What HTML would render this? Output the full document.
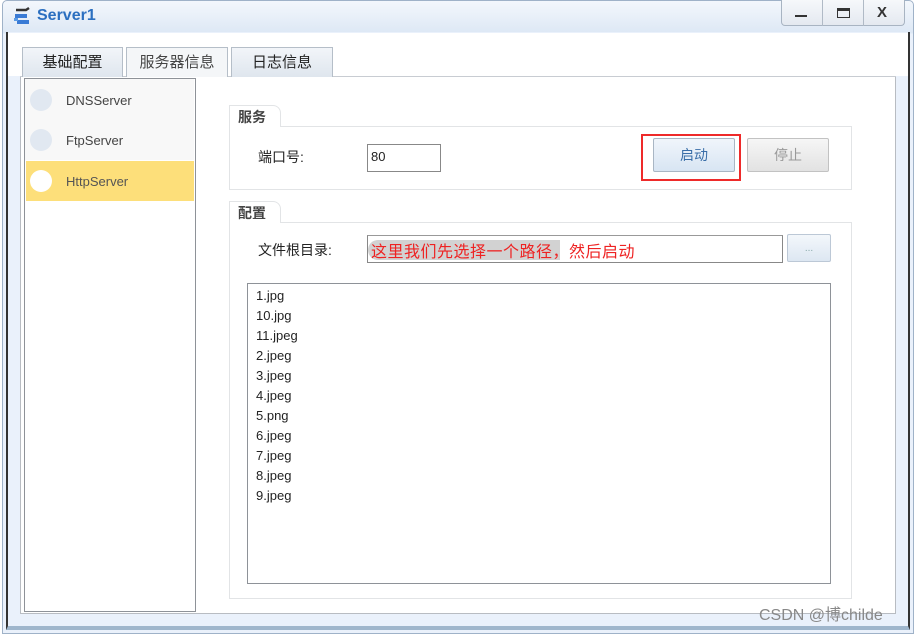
<!DOCTYPE html>
<html><head><meta charset="utf-8"><style>
*{margin:0;padding:0;box-sizing:border-box}
body{width:918px;height:636px;background:#fff;position:relative;overflow:hidden;font-family:"Liberation Sans","Noto Sans CJK SC",sans-serif;font-size:13px;color:#222}
.a{position:absolute}
</style></head><body>
<div class="a" style="left:0;top:0;width:918px;height:636px;background:#fff"></div>
<div class="a" style="left:2px;top:0;width:912px;height:634px;background:linear-gradient(#f3f7fc,#dde8f5 32px,#eaf1fb 33px);border:1px solid #9fb2c8;border-radius:5px 5px 0 0"></div>
<div class="a" style="left:6px;top:32px;width:904px;height:598px;background:#eaf1fb;border-left:2px solid #333;border-right:2px solid #333;border-bottom:4px solid #9fb6cc"></div>
<div class="a" style="left:12px;top:6px;width:20px;height:18px">
<svg width="20" height="20"><path d="M4 4h10l3-2" stroke="#333" stroke-width="2.5" fill="none"/><rect x="3" y="8" width="12" height="4" fill="#3a7bd5"/><rect x="5" y="14" width="12" height="4" fill="#3a7bd5"/><rect x="2" y="12" width="4" height="3" fill="#5a9be5"/></svg></div>
<div class="a" style="left:37px;top:7px;font-size:16px;font-weight:bold;color:#2b6fc0">Server1</div>
<div class="a" style="left:781px;top:0;width:124px;height:26px;border:1px solid #a8b4c2;border-top:none;border-radius:0 0 4px 4px;background:linear-gradient(#f6f8fb,#e4e9f0)"></div>
<div class="a" style="left:822px;top:0;width:1px;height:26px;background:#b0bac6"></div>
<div class="a" style="left:863px;top:0;width:1px;height:26px;background:#b0bac6"></div>
<div class="a" style="left:795px;top:15px;width:12px;height:2px;background:#333"></div>
<div class="a" style="left:837px;top:8px;width:13px;height:10px;border:1px solid #333;border-top:3px solid #333"></div>
<div class="a" style="left:877px;top:4px;font-size:15px;font-weight:bold;color:#333">X</div>
<div class="a" style="left:20px;top:76px;width:876px;height:538px;background:#fff;border:1px solid #b8bcc2"></div>
<div class="a" style="left:8px;top:33px;width:900px;height:43px;background:#fff"></div>
<div class="a" style="left:20px;top:76px;width:876px;height:1px;background:#c8ccd2"></div>
<div class="a" style="left:22px;top:47px;width:101px;height:30px;background:linear-gradient(#f2f5f9,#dfe6ee);border:1px solid #b5bec8;border-bottom:none;text-align:center;line-height:30px;font-size:15px">基础配置</div>
<div class="a" style="left:126px;top:47px;width:102px;height:30px;background:#f4f6f8;border:1px solid #b5bec8;border-bottom:none;text-align:center;line-height:30px;font-size:15px;color:#444">服务器信息</div>
<div class="a" style="left:231px;top:47px;width:102px;height:30px;background:linear-gradient(#f2f5f9,#dfe6ee);border:1px solid #b5bec8;border-bottom:none;text-align:center;line-height:30px;font-size:15px">日志信息</div>
<div class="a" style="left:24px;top:78px;width:172px;height:534px;border:1px solid #8e9298;background:#fff"></div>
<div class="a" style="left:25px;top:79px;width:169px;height:81px;background:#f8f8f8"></div>
<div class="a" style="left:26px;top:161px;width:168px;height:40px;background:#fddf7a"></div>
<div class="a" style="left:30px;top:89px;width:22px;height:22px;border-radius:50%;background:#e1e8f1"></div>
<div class="a" style="left:30px;top:129px;width:22px;height:22px;border-radius:50%;background:#e1e8f1"></div>
<div class="a" style="left:30px;top:170px;width:22px;height:22px;border-radius:50%;background:#fff"></div>
<div class="a" style="left:66px;top:93px;color:#444">DNSServer</div>
<div class="a" style="left:66px;top:133px;color:#444">FtpServer</div>
<div class="a" style="left:66px;top:174px;color:#555">HttpServer</div>
<div class="a" style="left:229px;top:126px;width:623px;height:64px;border:1px solid #e2e4e6"></div>
<div class="a" style="left:229px;top:105px;width:52px;height:22px;border:1px solid #e2e4e6;border-bottom:none;background:#fff;border-radius:0 8px 0 0;padding-left:8px;font-weight:bold;font-size:14px;color:#444;line-height:22px">服务</div>
<div class="a" style="left:258px;top:147px;font-size:14px">端口号:</div>
<div class="a" style="left:367px;top:144px;width:74px;height:28px;border:1px solid #888;padding:4px 3px;font-size:13px">80</div>
<div class="a" style="left:641px;top:134px;width:100px;height:47px;border:2px solid #ee2a2a"></div>
<div class="a" style="left:653px;top:138px;width:82px;height:34px;border:1px solid #a9b6c4;border-radius:2px;background:linear-gradient(#f0f5fb,#d8e5f3);text-align:center;line-height:32px;color:#3a6ea8;font-size:14px">启动</div>
<div class="a" style="left:747px;top:138px;width:82px;height:34px;border:1px solid #c2c2c2;border-radius:2px;background:linear-gradient(#f6f6f6,#e2e2e2);text-align:center;line-height:32px;color:#999;font-size:14px">停止</div>
<div class="a" style="left:229px;top:222px;width:623px;height:377px;border:1px solid #e2e4e6"></div>
<div class="a" style="left:229px;top:201px;width:52px;height:22px;border:1px solid #e2e4e6;border-bottom:none;background:#fff;border-radius:0 8px 0 0;padding-left:8px;font-weight:bold;font-size:14px;color:#444;line-height:22px">配置</div>
<div class="a" style="left:258px;top:240px;font-size:14px">文件根目录:</div>
<div class="a" style="left:367px;top:235px;width:416px;height:28px;border:1px solid #888;border-top-color:#999"></div>
<div class="a" style="left:368px;top:240px;width:192px;height:20px;background:#d2d2d2;border-radius:10px 0 0 10px"></div>
<div class="a" style="left:371px;top:238px;font-size:16px;letter-spacing:0.5px;color:#ee2222">这里我们先选择一个路径，然后启动</div>
<div class="a" style="left:787px;top:234px;width:44px;height:28px;border:1px solid #bcc8d6;border-radius:2px;background:linear-gradient(#f3f7fb,#dde7f2);text-align:center;color:#8aa;font-size:10px;line-height:28px">...</div>
<div class="a" style="left:247px;top:283px;width:584px;height:301px;border:1px solid #8e9298"></div>
<div class="a" style="left:256px;top:286px;line-height:20px;font-size:13px;color:#222">1.jpg<br>10.jpg<br>11.jpeg<br>2.jpeg<br>3.jpeg<br>4.jpeg<br>5.png<br>6.jpeg<br>7.jpeg<br>8.jpeg<br>9.jpeg</div>
<div class="a" style="left:759px;top:607px;font-size:16px;line-height:18px;color:#888">CSDN @博childe</div>
</body></html>
